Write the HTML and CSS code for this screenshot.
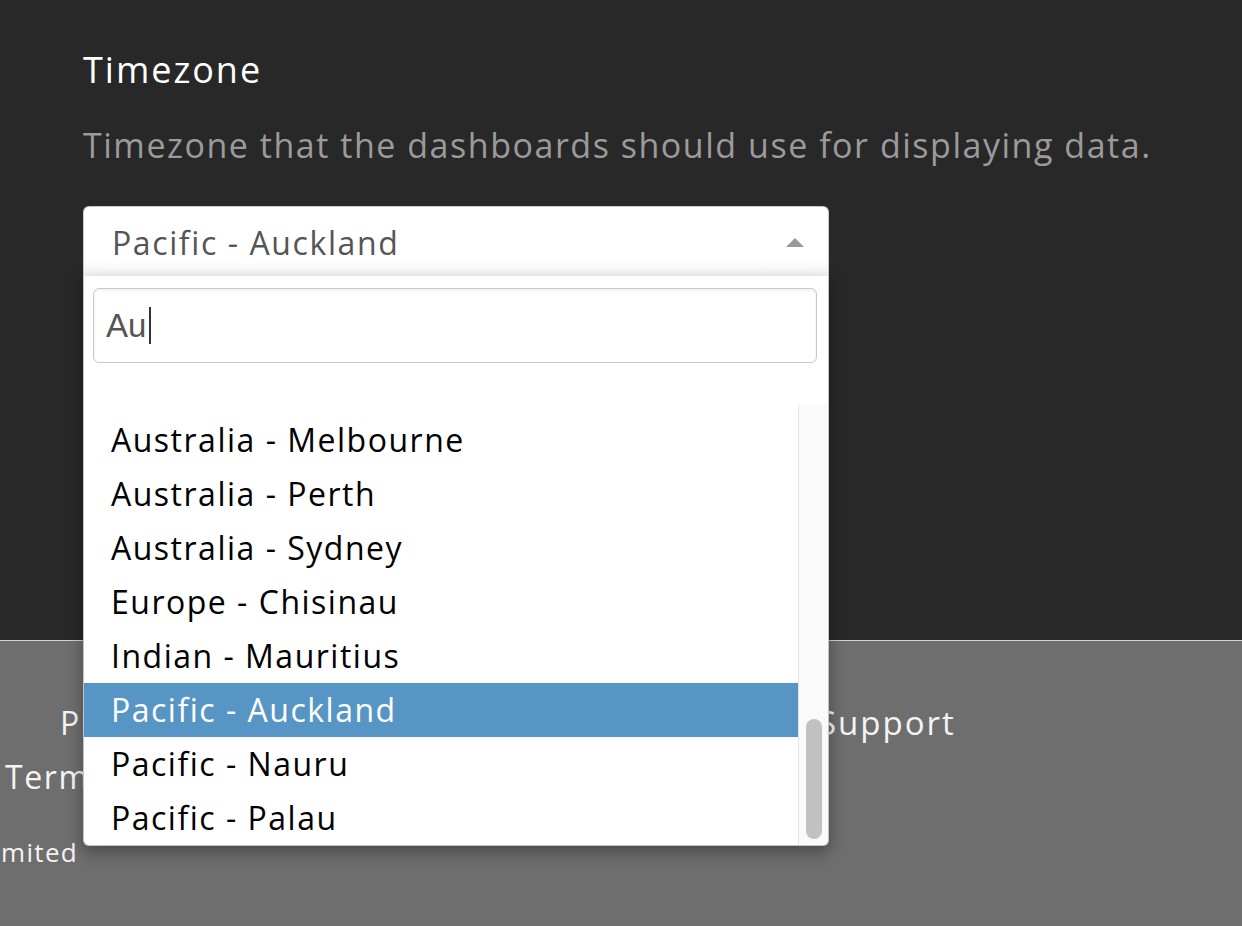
FILE: index.html
```html
<!DOCTYPE html>
<html lang="en">
<head>
<meta charset="utf-8">
<title>Timezone settings</title>
<link rel="stylesheet" href="styles.css">
</head>
<body>
<div class="page">
  <section class="settings">
    <h2 class="title">Timezone</h2>
    <p class="desc">Timezone that the dashboards should use for displaying data.</p>
    <div class="select">
      <div class="select-box">
        <span class="select-value">Pacific - Auckland</span>
        <span class="arrow"></span>
      </div>
      <div class="dropdown">
        <div class="search">
          <div class="search-input"><span class="search-text">Au</span><span class="caret"></span></div>
        </div>
        <div class="results">
          <ul class="options">
            <li class="option">Australia - Melbourne</li>
            <li class="option">Australia - Perth</li>
            <li class="option">Australia - Sydney</li>
            <li class="option">Europe - Chisinau</li>
            <li class="option">Indian - Mauritius</li>
            <li class="option is-active">Pacific - Auckland</li>
            <li class="option">Pacific - Nauru</li>
            <li class="option">Pacific - Palau</li>
          </ul>
          <div class="scrollbar"><div class="thumb"></div></div>
        </div>
      </div>
    </div>
  </section>
  <footer class="footer">
    <div class="footer-legal">
      <div class="f-line f-privacy">Privacy</div>
      <div class="f-line f-terms">Terms</div>
      <div class="f-copy"><span>© Limited</span></div>
    </div>
    <div class="footer-support">Support</div>
  </footer>
</div>
</body>
</html>
```
FILE: styles.css
```css
* { box-sizing: border-box; }
html, body { margin: 0; padding: 0; }
body {
  background: #282828;
  font-family: "Open Sans", "DejaVu Sans", sans-serif;
  width: 1242px;
  height: 926px;
  overflow: hidden;
}
.page { display: flex; flex-direction: column; height: 926px; }

.settings {
  height: 640px;
  padding: 49px 0 0 83px;
  flex: none;
}
.title {
  margin: 0;
  font-size: 36px;
  line-height: 42px;
  font-weight: 400;
  color: #ffffff;
  letter-spacing: 0.055em;
}
.desc {
  margin: 33px 0 0 0;
  font-size: 34px;
  line-height: 42px;
  color: #9b9b9b;
  letter-spacing: 0.045em;
}

.select {
  position: relative;
  width: 746px;
  margin-top: 40px;
}
.select-box {
  height: 70px;
  display: flex;
  align-items: center;
  padding: 0 24px 0 28px;
  border: 1px solid #c9c9c9;
  border-bottom: none;
  border-radius: 6px 6px 0 0;
  background: linear-gradient(to bottom, #ffffff 76%, #f5f5f5 100%);
}
.select-value {
  font-size: 32px;
  line-height: 68px;
  color: #555555;
  letter-spacing: 0.05em;
  padding-top: 2px;
}
.arrow {
  margin-left: auto;
  width: 0;
  height: 0;
  border-left: 9px solid transparent;
  border-right: 9px solid transparent;
  border-bottom: 9px solid #999999;
  margin-top: 1px;
}

.dropdown {
  position: absolute;
  top: 100%;
  left: 0;
  width: 746px;
  z-index: 10;
  background: #ffffff;
  border: 1px solid #c4c4c4;
  border-top: none;
  border-radius: 0 0 6px 6px;
  box-shadow: 0 6px 16px rgba(0, 0, 0, 0.35);
  overflow: hidden;
}
.search {
  padding: 12px 11px 0 9px;
}
.search-input {
  height: 75px;
  display: flex;
  align-items: center;
  padding-left: 12px;
  border: 1px solid #c9c9c9;
  border-radius: 6px;
  box-shadow: inset 0 2px 3px rgba(0, 0, 0, 0.06);
  font-family: "Liberation Sans", Arial, sans-serif;
  font-size: 33px;
  color: #555555;
}
.caret {
  display: inline-block;
  width: 2px;
  height: 37px;
  margin-left: 3px;
  background: #333333;
}

.results {
  display: flex;
  margin-top: 42px;
  height: 440px;
}
.options {
  list-style: none;
  margin: 0;
  padding: 8px 0 0 0;
  flex: 1;
}
.option {
  height: 54px;
  line-height: 54px;
  padding-left: 27px;
  font-size: 32px;
  color: #000000;
  letter-spacing: 0.047em;
  white-space: nowrap;
}
.option.is-active {
  background: #5796c4;
  color: #ffffff;
}
.scrollbar {
  width: 30px;
  flex: none;
  background: #fafafa;
  border-left: 1px solid #e6e6e6;
  display: flex;
  flex-direction: column;
  justify-content: flex-end;
  align-items: center;
  padding: 0 0 6px 0;
}
.thumb {
  width: 16px;
  height: 120px;
  border-radius: 8px;
  background: #c1c1c1;
}

.footer {
  flex: 1;
  background: #6e6e6e;
  border-top: 1px solid #d2d2d2;
  display: grid;
  grid-template-columns: 818px auto;
  padding-top: 55px;
  color: #f4f4f4;
}
.footer-legal {
  display: flex;
  flex-direction: column;
}
.f-line {
  font-size: 32px;
  line-height: 54px;
  white-space: nowrap;
  letter-spacing: 0.05em;
}
.f-privacy { padding-left: 60px; }
.f-terms { padding-left: 5px; }
.f-copy {
  width: 78px;
  display: flex;
  justify-content: flex-end;
  font-size: 26px;
  line-height: 40px;
  margin-top: 28px;
  white-space: nowrap;
  letter-spacing: 0.05em;
}
.footer-support {
  font-size: 33px;
  line-height: 54px;
  letter-spacing: 0.06em;
}
```
